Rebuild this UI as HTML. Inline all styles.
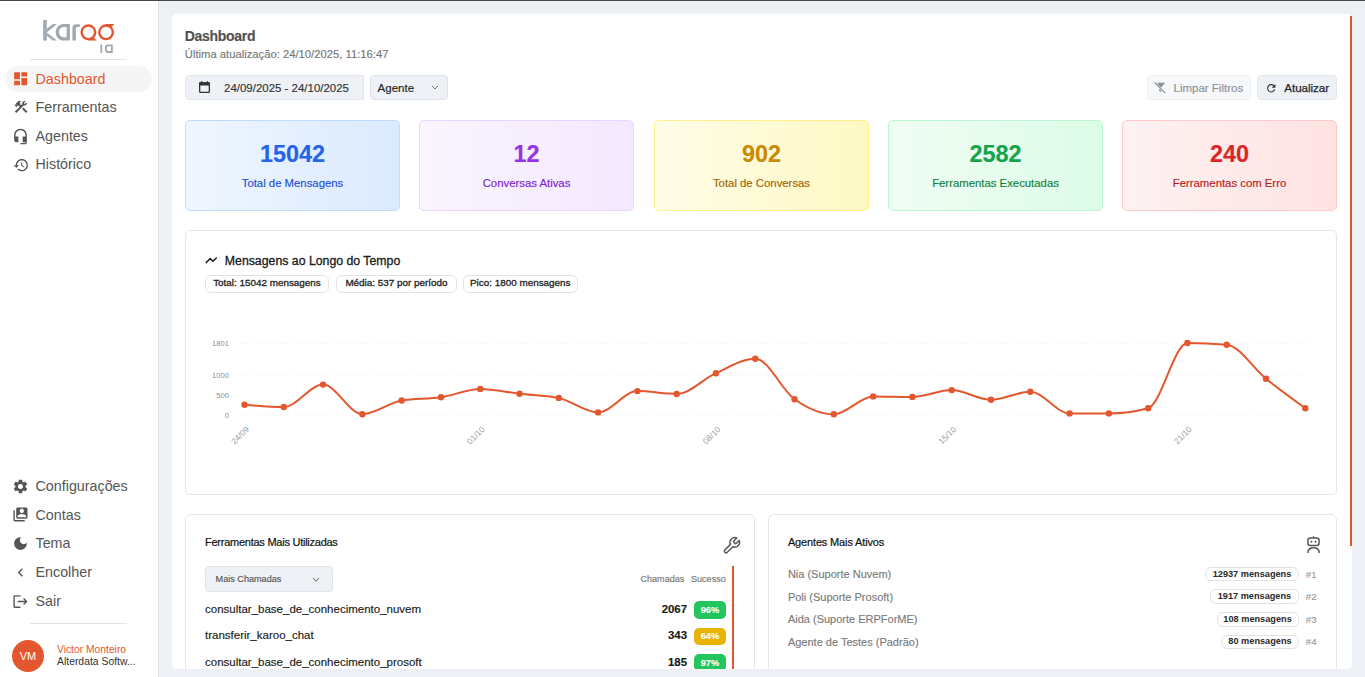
<!DOCTYPE html>
<html><head><meta charset="utf-8"><style>
html,body{margin:0;padding:0}
body{width:1365px;height:677px;overflow:hidden;position:relative;background:#edf1f5;font-family:"Liberation Sans",sans-serif}
#topline{position:absolute;left:0;top:0;width:1365px;height:1px;background:#45474a}
#side{position:absolute;left:0;top:1px;width:158px;height:676px;background:#fff;border-right:1px solid #e3e3e3}
#side .t,#side .bx,#side .ic{margin-top:-1px}
#side .t{-webkit-text-stroke:0}
#card{position:absolute;left:0;top:0;width:1365px;height:677px;clip-path:inset(14px 13px 8px 172px round 5px)}
#cardbg{position:absolute;left:172px;top:14px;width:1180px;height:655px;background:#fff;border-radius:5px}
.t{position:absolute;white-space:nowrap;line-height:1;-webkit-text-stroke:0.15px currentColor}
.bx{position:absolute;box-sizing:content-box}
.ic{position:absolute;overflow:visible}
</style></head><body>
<div id="topline"></div>
<div id="cardbg"></div>
<div id="side"><svg class="ic" style="left:40px;top:16px;width:80px;height:40px" viewBox="40 16 80 40">
<g fill="#a2aab1">
<rect x="43.2" y="20" width="3.6" height="20.6"/>
<path d="M46.8,28.8L52.8,24H56.9L46.8,32.4L57,40.6H52.8L46.8,35.8Z"/>
<path fill-rule="evenodd" d="M69.9,24H63.5C59.2,24 55.7,27.7 55.7,32.3C55.7,36.9 59.2,40.6 63.5,40.6H69.9ZM66.6,26.9H63.6C61.1,26.9 59,29.2 59,32.1C59,35 61.1,37.3 63.6,37.3H66.6Z"/>
<path d="M72.4,40.5V28.3Q72.4,24.3 76.3,24.3H79.8V26.9H77Q75.9,26.9 75.9,28.4V40.5Z"/>
<rect x="100.4" y="44.4" width="1.8" height="8.5"/>
<path fill-rule="evenodd" d="M112.8,44.4H107.9Q104.9,44.4 104.9,48.65Q104.9,52.9 107.9,52.9H112.8ZM111,46.2H108.3Q106.7,46.2 106.7,48.65Q106.7,51.1 108.3,51.1H111Z"/>
</g>
<g fill="none" stroke="#e4572e" stroke-width="2.4">
<circle cx="88.4" cy="32.3" r="6.8"/>
<circle cx="106.05" cy="32.3" r="6.8"/>
</g>
<g fill="#e4572e">
<path d="M88,39.2V40.6H96.8L93.6,37.4Z"/>
<path d="M106,25.4V24H114.2L111.2,27.5Z"/>
</g>
</svg><div class="bx" style="left:30px;top:59px;width:97px;height:1px;background:#e3e3e3"></div><div class="bx" style="left:5px;top:66px;width:146.5px;height:26px;border-radius:13px;background:#f5f5f5"></div><svg class="ic" style="left:11.75px;top:69.75px;width:17.3px;height:17.3px" viewBox="0 0 24 24"><path fill="#e4572e" d="M3 13h8V3H3v10zm0 8h8v-6H3v6zm10 0h8V11h-8v10zm0-18v6h8V3h-8z"/></svg><div class="t" style="left:35.5px;top:72.40px;font-size:14.3px;color:#e4572e">Dashboard</div><svg class="ic" style="left:12.70px;top:99.40px;width:15.8px;height:15.8px" viewBox="0 0 24 24"><path fill="#555" d="M13.783 15.172l2.121-2.121 5.996 5.996-2.121 2.121zM17.5 10c1.93 0 3.5-1.57 3.5-3.5 0-.58-.16-1.12-.41-1.6l-2.7 2.7-1.49-1.49 2.7-2.7c-.48-.25-1.02-.41-1.6-.41C15.57 3 14 4.57 14 6.5c0 .41.08.8.21 1.16l-1.85 1.85-1.78-1.78.71-.71-1.41-1.41L12 3.49c-1.17-1.17-3.07-1.170-4.24 0L4.22 7.03l1.41 1.41H2.81l-.71.71 3.54 3.54.71-.71V9.15l1.41 1.41.71-.71 1.78 1.78-7.41 7.41 2.12 2.12L16.340 9.79c.36.13.75.21 1.16.21z"/></svg><div class="t" style="left:35.5px;top:100.10px;font-size:14.3px;color:#555">Ferramentas</div><svg class="ic" style="left:12.10px;top:127.90px;width:17px;height:17px" viewBox="0 0 24 24"><path fill="#555" d="M12 1c-4.97 0-9 4.03-9 9v7c0 1.66 1.34 3 3 3h3v-8H5v-2c0-3.87 3.13-7 7-7s7 3.13 7 7v2h-4v8h4v1h-7v2h6c1.66 0 3-1.34 3-3V10c0-4.97-4.030-9-9-9z"/></svg><div class="t" style="left:35.5px;top:129.20px;font-size:14.3px;color:#555">Agentes</div><svg class="ic" style="left:12.55px;top:157.25px;width:16.3px;height:16.3px" viewBox="0 0 24 24"><path fill="#555" d="M13 3c-4.97 0-9 4.03-9 9H1l3.89 3.89.07.14L9 12H6c0-3.87 3.13-7 7-7s7 3.13 7 7-3.13 7-7 7c-1.93 0-3.68-.79-4.94-2.06l-1.42 1.42C8.27 19.99 10.51 21 13 21c4.97 0 9-4.03 9-9s-4.03-9-9-9zm-1 5v5l4.28 2.54.72-1.21-3.5-2.08V8H12z"/></svg><div class="t" style="left:35.5px;top:157.40px;font-size:14.3px;color:#555">Histórico</div><svg class="ic" style="left:11.95px;top:478.30px;width:17px;height:17px" viewBox="0 0 24 24"><path fill="#555" d="M19.14 12.94c.04-.3.06-.61.06-.94 0-.32-.02-.64-.07-.94l2.03-1.58c.18-.14.23-.41.12-.61l-1.92-3.32c-.12-.22-.37-.29-.59-.22l-2.39.96c-.5-.38-1.03-.7-1.62-.94l-.36-2.54c-.04-.24-.24-.41-.48-.41h-3.84c-.24 0-.43.17-.47.41l-.36 2.54c-.59.24-1.13.57-1.62.94l-2.39-.96c-.22-.08-.47 0-.59.22L2.74 8.87c-.12.21-.08.47.12.61l2.03 1.58c-.05.3-.09.63-.09.94s.02.64.07.94l-2.03 1.58c-.18.14-.23.41-.12.61l1.92 3.32c.12.22.37.29.59.22l2.39-.96c.5.38 1.03.7 1.62.94l.36 2.54c.05.24.24.41.48.41h3.84c.24 0 .44-.17.47-.41l.36-2.54c.59-.24 1.13-.56 1.62-.94l2.39.96c.22.08.47 0 .59-.22l1.92-3.32c.12-.22.07-.47-.12-.61l-2.01-1.58zM12 15.6c-1.98 0-3.6-1.62-3.6-3.6s1.620-3.6 3.6-3.6 3.6 1.62 3.6 3.6-1.62 3.6-3.6 3.6z"/></svg><div class="t" style="left:35.5px;top:479.10px;font-size:14.3px;color:#555">Configurações</div><svg class="ic" style="left:12.05px;top:505.85px;width:16.9px;height:16.9px" viewBox="0 0 24 24"><path fill="#555" d="M4 6H2v14c0 1.1.9 2 2 2h14v-2H4V6zm16-4H8c-1.1 0-2 .9-2 2v12c0 1.1.9 2 2 2h12c1.1 0 2-.9 2-2V4c0-1.1-.9-2-2-2zm-6 2c1.66 0 3 1.34 3 3s-1.34 3-3 3-3-1.34-3-3 1.34-3 3-3zm6 12H8v-1.5c0-1.99 4-3 6-3s6 1.01 6 3V16z"/></svg><div class="t" style="left:35.5px;top:507.50px;font-size:14.3px;color:#555">Contas</div><svg class="ic" style="left:12.25px;top:535.30px;width:17px;height:17px" viewBox="0 0 24 24"><path fill="#555" d="M12 3c-4.97 0-9 4.03-9 9s4.03 9 9 9 9-4.03 9-9c0-.46-.04-.92-.1-1.36-.98 1.37-2.58 2.26-4.4 2.260-2.98 0-5.4-2.42-5.4-5.4 0-1.81.89-3.42 2.26-4.4-.44-.06-.9-.1-1.36-.1z"/></svg><div class="t" style="left:35.5px;top:536.00px;font-size:14.3px;color:#555">Tema</div><svg class="ic" style="left:12.00px;top:564.30px;width:17px;height:17px" viewBox="0 0 24 24"><path fill="#555" d="M15.41 7.41L14 6l-6 6 6 6 1.41-1.41L10.83 12z"/></svg><div class="t" style="left:35.5px;top:564.70px;font-size:14.3px;color:#555">Encolher</div><svg class="ic" style="left:11.95px;top:593.20px;width:17px;height:17px" viewBox="0 0 24 24"><path fill="#555" d="M17 7l-1.41 1.41L18.17 11H8v2h10.17l-2.58 2.58L17 17l5-5zM4 5h8V3H4c-1.1 0-2 .9-2 2v14c0 1.1.9 2 2 2h8v-2H4V5z"/></svg><div class="t" style="left:35.5px;top:594.00px;font-size:14.3px;color:#555">Sair</div><div class="bx" style="left:30px;top:623px;width:97px;height:1px;background:#e3e3e3"></div><div class="bx" style="left:12px;top:640px;width:32px;height:32px;border-radius:50%;background:#e4572e"></div><div class="t" style="left:-172px;width:400px;text-align:center;top:651.29px;font-size:11px;color:#fff;">VM</div><div class="t" style="left:57px;top:644.68px;font-size:10.3px;color:#e4572e">Victor Monteiro</div><div class="t" style="left:57px;top:656.80px;font-size:10.4px;color:#333">Alterdata Softw...</div></div><div id="card"><div class="t" style="left:184.8px;top:28.75px;font-size:14px;color:#505050;font-weight:700;letter-spacing:-0.3px">Dashboard</div><div class="t" style="left:184.8px;top:48.97px;font-size:11.26px;color:#777">Última atualização: 24/10/2025, 11:16:47</div><div class="bx" style="left:185px;top:75px;width:177px;height:23px;border:1px solid #e3e7eb;background:#eef1f5;border-radius:4px 0 0 4px"></div><svg class="ic" style="left:195px;top:78px;width:18px;height:18px" viewBox="195 78 18 18"><rect x="199.65" y="82.85" width="9.7" height="9.5" rx="0.9" fill="none" stroke="#333" stroke-width="1.3"/><rect x="199" y="82.2" width="11" height="3.2" rx="0.9" fill="#333"/><rect x="200.9" y="81.2" width="1.4" height="2" fill="#333"/><rect x="206.7" y="81.2" width="1.4" height="2" fill="#333"/></svg><div class="t" style="left:224px;top:82.69px;font-size:11.47px;color:#333">24/09/2025 - 24/10/2025</div><div class="bx" style="left:370px;top:75px;width:76px;height:23px;border:1px solid #dfe3e8;background:#eef1f5;border-radius:4px"></div><div class="t" style="left:377.6px;top:83.17px;font-size:11.5px;color:#222">Agente</div><svg class="ic" style="left:430.5px;top:84.5px;width:8px;height:5px" viewBox="0 0 8 5"><path d="M1 1L4 4L7 1" fill="none" stroke="#777" stroke-width="1"/></svg><div class="bx" style="left:1146.6px;top:75.4px;width:102.5px;height:22.5px;border:1px solid #edf0f3;background:#f6f8fa;border-radius:4px"></div><svg class="ic" style="left:1150px;top:76px;width:30px;height:22px" viewBox="1150 76 30 22"><path d="M1157.4,82.8H1165.1L1161.4,87.2V92.3L1159.2,91V87.2Z" fill="#8c9197"/><path d="M1154.4,82.2L1165.4,93.2" stroke="#f6f8fa" stroke-width="2.2"/><path d="M1155,82.8L1164.8,92.6" stroke="#8c9197" stroke-width="1.25" stroke-linecap="round"/></svg><div class="t" style="left:1173.5px;top:83.07px;font-size:11.5px;color:#8c9197">Limpar Filtros</div><div class="bx" style="left:1257.3px;top:75.4px;width:77.4px;height:22.5px;border:1px solid #e3e7eb;background:#eef1f5;border-radius:4px"></div><svg class="ic" style="left:1265px;top:81.7px;width:12.5px;height:12.5px" viewBox="0 0 24 24"><path fill="#333" d="M17.65 6.35C16.2 4.9 14.21 4 12 4c-4.42 0-7.99 3.58-7.99 8s3.57 8 7.99 8c3.73 0 6.84-2.55 7.73-6h-2.08c-.82 2.33-3.04 4-5.65 4-3.31 0-6-2.69-6-6s2.69-6 6-6c1.66 0 3.14.69 4.22 1.78L13 11h7V4l-2.35 2.35z"/></svg><div class="t" style="left:1284.3px;top:82.18px;font-size:11.6px;color:#1f2328;font-weight:400;-webkit-text-stroke:0.25px #1f2328;letter-spacing:-0.05px">Atualizar</div><div class="bx" style="left:185px;top:120px;width:213px;height:89px;border:1px solid #bfdbfe;border-radius:5px;background:linear-gradient(to right,#eff6ff,#dbeafe)"></div><div class="t" style="left:92.5px;width:400px;text-align:center;top:142.99px;font-size:23.4px;color:#2563eb;font-weight:700">15042</div><div class="t" style="left:92.5px;width:400px;text-align:center;top:177.99px;font-size:11.35px;color:#1d4ed8">Total de Mensagens</div><div class="bx" style="left:419px;top:120px;width:213px;height:89px;border:1px solid #e9d5ff;border-radius:5px;background:linear-gradient(to right,#faf5ff,#f3e8ff)"></div><div class="t" style="left:326.5px;width:400px;text-align:center;top:142.99px;font-size:23.4px;color:#9333ea;font-weight:700">12</div><div class="t" style="left:326.5px;width:400px;text-align:center;top:177.99px;font-size:11.35px;color:#7e22ce">Conversas Ativas</div><div class="bx" style="left:654px;top:120px;width:213px;height:89px;border:1px solid #fef08a;border-radius:5px;background:linear-gradient(to right,#fefce8,#fef9c3)"></div><div class="t" style="left:561.5px;width:400px;text-align:center;top:142.99px;font-size:23.4px;color:#ca8a04;font-weight:700">902</div><div class="t" style="left:561.5px;width:400px;text-align:center;top:177.99px;font-size:11.35px;color:#a16207">Total de Conversas</div><div class="bx" style="left:888px;top:120px;width:213px;height:89px;border:1px solid #bbf7d0;border-radius:5px;background:linear-gradient(to right,#f0fdf4,#dcfce7)"></div><div class="t" style="left:795.5px;width:400px;text-align:center;top:142.99px;font-size:23.4px;color:#16a34a;font-weight:700">2582</div><div class="t" style="left:795.5px;width:400px;text-align:center;top:177.99px;font-size:11.35px;color:#15803d">Ferramentas Executadas</div><div class="bx" style="left:1122px;top:120px;width:213px;height:89px;border:1px solid #fecaca;border-radius:5px;background:linear-gradient(to right,#fef2f2,#fee2e2)"></div><div class="t" style="left:1029.5px;width:400px;text-align:center;top:142.99px;font-size:23.4px;color:#dc2626;font-weight:700">240</div><div class="t" style="left:1029.5px;width:400px;text-align:center;top:177.99px;font-size:11.35px;color:#b91c1c">Ferramentas com Erro</div><div class="bx" style="left:185px;top:230px;width:1150px;height:263px;border:1px solid #e4e6e9;border-radius:5px"></div><svg class="ic" style="left:200px;top:250px;width:30px;height:20px" viewBox="200 250 30 20"><path d="M206.3 262.6L210.2 258.5L212.9 261.3L216.3 258" fill="none" stroke="#1a1a1a" stroke-width="1.5" stroke-linecap="round" stroke-linejoin="round"/></svg><div class="t" style="left:224.8px;top:254.79px;font-size:12.3px;color:#1a1a1a;-webkit-text-stroke:0.3px #1a1a1a">Mensagens ao Longo do Tempo</div><div class="bx" style="left:205.3px;top:275.3px;width:121.3px;height:15.4px;border:1px solid #e2e2e2;border-radius:6px"></div><div class="t" style="left:66.95000000000005px;width:400px;text-align:center;top:277.92px;font-size:9.9px;color:#222;-webkit-text-stroke:0.3px #222">Total: 15042 mensagens</div><div class="bx" style="left:336.3px;top:275.3px;width:118.3px;height:15.4px;border:1px solid #e2e2e2;border-radius:6px"></div><div class="t" style="left:196.45000000000005px;width:400px;text-align:center;top:277.92px;font-size:9.9px;color:#222;-webkit-text-stroke:0.3px #222">Média: 537 por período</div><div class="bx" style="left:463px;top:275.3px;width:112.5px;height:15.4px;border:1px solid #e2e2e2;border-radius:6px"></div><div class="t" style="left:320.25px;width:400px;text-align:center;top:277.92px;font-size:9.9px;color:#222;-webkit-text-stroke:0.3px #222">Pico: 1800 mensagens</div><svg class="ic" style="left:0;top:0;width:1365px;height:677px" viewBox="0 0 1365 677">
<g stroke="#f1f1f1" stroke-width="1" stroke-dasharray="2 3"><line x1="240.7" y1="343" x2="1309.4" y2="343"/><line x1="240.7" y1="374.9" x2="1309.4" y2="374.9"/><line x1="240.7" y1="414.8" x2="1309.4" y2="414.8"/></g>
<g font-family="Liberation Sans" font-size="7.6" fill="#8a8f98" text-anchor="end"><text x="229" y="345.6">1801</text><text x="229" y="377.5">1000</text><text x="229" y="397.5">500</text><text x="229" y="418.4">0</text></g>
<g font-family="Liberation Sans" font-size="8.4" fill="#9a9ea5" text-anchor="end"><text transform="translate(249.5,430) rotate(-45)">24/09</text><text transform="translate(485.2,430) rotate(-45)">01/10</text><text transform="translate(721.0,430) rotate(-45)">08/10</text><text transform="translate(956.7,430) rotate(-45)">15/10</text><text transform="translate(1192.4,430) rotate(-45)">21/10</text></g>
<path d="M244.50,404.70C257.60,405.85,270.69,407.00,283.79,407.00C296.89,407.00,309.98,384.60,323.08,384.60C336.17,384.60,349.27,414.20,362.37,414.20C375.46,414.20,388.56,402.63,401.66,400.50C414.75,398.37,427.85,399.23,440.94,397.30C454.04,395.37,467.14,388.90,480.23,388.90C493.33,388.90,506.43,392.20,519.52,393.70C532.62,395.20,545.71,395.10,558.81,397.90C571.91,400.70,585.00,412.40,598.10,412.40C611.20,412.40,624.29,391.10,637.39,391.10C650.49,391.10,663.58,394.00,676.68,394.00C689.77,394.00,702.87,379.08,715.97,373.20C729.06,367.32,742.16,358.70,755.26,358.70C768.35,358.70,781.45,389.93,794.54,399.20C807.64,408.47,820.74,414.30,833.83,414.30C846.93,414.30,860.03,396.40,873.12,396.40C886.22,396.40,899.31,396.90,912.41,396.90C925.51,396.90,938.60,390.10,951.70,390.10C964.80,390.10,977.89,399.80,990.99,399.80C1004.09,399.80,1017.18,391.80,1030.28,391.80C1043.37,391.80,1056.47,413.40,1069.57,413.40C1082.66,413.40,1095.76,413.40,1108.86,413.40C1121.95,413.40,1135.05,411.67,1148.14,408.20C1161.24,404.73,1174.34,343.00,1187.43,343.00C1200.53,343.00,1213.63,343.57,1226.72,344.70C1239.82,345.83,1252.91,368.22,1266.01,378.80C1279.11,389.38,1292.20,398.79,1305.30,408.20" fill="none" stroke="#e4572e" stroke-width="2"/>
<g fill="#e4572e"><circle cx="244.50" cy="404.70" r="3.2"/><circle cx="283.79" cy="407.00" r="3.2"/><circle cx="323.08" cy="384.60" r="3.2"/><circle cx="362.37" cy="414.20" r="3.2"/><circle cx="401.66" cy="400.50" r="3.2"/><circle cx="440.94" cy="397.30" r="3.2"/><circle cx="480.23" cy="388.90" r="3.2"/><circle cx="519.52" cy="393.70" r="3.2"/><circle cx="558.81" cy="397.90" r="3.2"/><circle cx="598.10" cy="412.40" r="3.2"/><circle cx="637.39" cy="391.10" r="3.2"/><circle cx="676.68" cy="394.00" r="3.2"/><circle cx="715.97" cy="373.20" r="3.2"/><circle cx="755.26" cy="358.70" r="3.2"/><circle cx="794.54" cy="399.20" r="3.2"/><circle cx="833.83" cy="414.30" r="3.2"/><circle cx="873.12" cy="396.40" r="3.2"/><circle cx="912.41" cy="396.90" r="3.2"/><circle cx="951.70" cy="390.10" r="3.2"/><circle cx="990.99" cy="399.80" r="3.2"/><circle cx="1030.28" cy="391.80" r="3.2"/><circle cx="1069.57" cy="413.40" r="3.2"/><circle cx="1108.86" cy="413.40" r="3.2"/><circle cx="1148.14" cy="408.20" r="3.2"/><circle cx="1187.43" cy="343.00" r="3.2"/><circle cx="1226.72" cy="344.70" r="3.2"/><circle cx="1266.01" cy="378.80" r="3.2"/><circle cx="1305.30" cy="408.20" r="3.2"/></g>
</svg><div class="bx" style="left:185px;top:514px;width:568px;height:200px;border:1px solid #e4e6e9;border-radius:6px"></div><div class="t" style="left:205px;top:537.29px;font-size:11px;color:#111;letter-spacing:-0.25px;-webkit-text-stroke:0.2px #111">Ferramentas Mais Utilizadas</div><svg class="ic" style="left:721.8px;top:535.6px;width:19.2px;height:19.2px" viewBox="0 0 24 24"><path d="M14.7 6.3a1 1 0 0 0 0 1.4l1.6 1.6a1 1 0 0 0 1.4 0l3.77-3.77a6 6 0 0 1-7.94 7.94l-6.91 6.91a2.12 2.12 0 0 1-3-3l6.91-6.91a6 6 0 0 1 7.94-7.94l-3.76 3.76z" fill="none" stroke="#5a5a5a" stroke-width="1.9" stroke-linejoin="round"/></svg><div class="bx" style="left:205px;top:566.2px;width:126px;height:23.4px;border:1px solid #e0e4e8;background:#eef1f5;border-radius:4px"></div><div class="t" style="left:215.6px;top:575.40px;font-size:9.1px;color:#555">Mais Chamadas</div><svg class="ic" style="left:311.6px;top:576.9px;width:8px;height:5px" viewBox="0 0 8 5"><path d="M1 1L4 4L7 1" fill="none" stroke="#7a7a7a" stroke-width="1.05"/></svg><div class="t" style="right:680.6px;top:574.90px;font-size:9.1px;color:#777">Chamadas</div><div class="t" style="right:639.2px;top:574.90px;font-size:9.1px;color:#777">Sucesso</div><div class="bx" style="left:732.2px;top:566.3px;width:2px;height:110px;background:#e4572e"></div><div class="t" style="left:205px;top:603.97px;font-size:11.5px;color:#1a1a1a">consultar_base_de_conhecimento_nuvem</div><div class="t" style="right:678px;top:604.05px;font-size:11.4px;color:#1a1a1a;font-weight:700">2067</div><div class="bx" style="left:694px;top:601.3px;width:31.8px;height:17.3px;border-radius:5px;background:#22c55e"></div><div class="t" style="left:509.9px;width:400px;text-align:center;top:605.71px;font-size:9.2px;color:#fff;font-weight:700">96%</div><div class="t" style="left:205px;top:630.07px;font-size:11.5px;color:#1a1a1a">transferir_karoo_chat</div><div class="t" style="right:678px;top:630.15px;font-size:11.4px;color:#1a1a1a;font-weight:700">343</div><div class="bx" style="left:694px;top:628px;width:31.8px;height:17.3px;border-radius:5px;background:#eab308"></div><div class="t" style="left:509.9px;width:400px;text-align:center;top:632.41px;font-size:9.2px;color:#fff;font-weight:700">64%</div><div class="t" style="left:205px;top:657.07px;font-size:11.5px;color:#1a1a1a">consultar_base_de_conhecimento_prosoft</div><div class="t" style="right:678px;top:657.15px;font-size:11.4px;color:#1a1a1a;font-weight:700">185</div><div class="bx" style="left:694px;top:654.2px;width:31.8px;height:17.3px;border-radius:5px;background:#22c55e"></div><div class="t" style="left:509.9px;width:400px;text-align:center;top:658.61px;font-size:9.2px;color:#fff;font-weight:700">97%</div><div class="bx" style="left:768px;top:514px;width:567px;height:200px;border:1px solid #e4e6e9;border-radius:6px"></div><div class="t" style="left:787.9px;top:537.09px;font-size:11px;color:#111;letter-spacing:-0.15px;-webkit-text-stroke:0.2px #111">Agentes Mais Ativos</div><svg class="ic" style="left:1305px;top:535px;width:18px;height:20px" viewBox="0 0 18 20"><rect x="2.9" y="3" width="11.2" height="7.4" rx="2.5" fill="none" stroke="#555" stroke-width="1.45"/><path d="M8.5 1.3V3" stroke="#555" stroke-width="1.2"/><circle cx="6.45" cy="6.7" r="1" fill="#555"/><circle cx="10.5" cy="6.7" r="1" fill="#555"/><path d="M2.9 18C2.9 14.6 5.4 12.75 8.55 12.75S14.2 14.6 14.2 18" fill="none" stroke="#555" stroke-width="1.45"/></svg><div class="t" style="left:787.9px;top:569.19px;font-size:11px;color:#7a7a7a">Nia (Suporte Nuvem)</div><div class="bx" style="left:1205.4px;top:567.2px;width:91.2px;height:12.2px;border:1px solid #e2e2e2;border-radius:6px"></div><div class="t" style="left:1052.0px;width:400px;text-align:center;top:569.51px;font-size:9.2px;color:#2a2a2a;font-weight:700;-webkit-text-stroke:0">12937 mensagens</div><div class="t" style="left:1305.8px;top:569.77px;font-size:9.6px;color:#999">#1</div><div class="t" style="left:787.9px;top:592.09px;font-size:11px;color:#7a7a7a">Poli (Suporte Prosoft)</div><div class="bx" style="left:1210.3px;top:589.4px;width:86.3px;height:12.2px;border:1px solid #e2e2e2;border-radius:6px"></div><div class="t" style="left:1054.4499999999998px;width:400px;text-align:center;top:591.71px;font-size:9.2px;color:#2a2a2a;font-weight:700;-webkit-text-stroke:0">1917 mensagens</div><div class="t" style="left:1305.8px;top:591.97px;font-size:9.6px;color:#999">#2</div><div class="t" style="left:787.9px;top:614.29px;font-size:11px;color:#7a7a7a">Aida (Suporte ERPForME)</div><div class="bx" style="left:1216.5px;top:612.4px;width:80.1px;height:12.2px;border:1px solid #e2e2e2;border-radius:6px"></div><div class="t" style="left:1057.55px;width:400px;text-align:center;top:614.71px;font-size:9.2px;color:#2a2a2a;font-weight:700;-webkit-text-stroke:0">108 mensagens</div><div class="t" style="left:1305.8px;top:614.97px;font-size:9.6px;color:#999">#3</div><div class="t" style="left:787.9px;top:636.99px;font-size:11px;color:#7a7a7a">Agente de Testes (Padrão)</div><div class="bx" style="left:1221.4px;top:634.6px;width:75.2px;height:12.2px;border:1px solid #e2e2e2;border-radius:6px"></div><div class="t" style="left:1060.0px;width:400px;text-align:center;top:636.91px;font-size:9.2px;color:#2a2a2a;font-weight:700;-webkit-text-stroke:0">80 mensagens</div><div class="t" style="left:1305.8px;top:637.17px;font-size:9.6px;color:#999">#4</div></div><div class="bx" style="left:1350px;top:16px;width:2px;height:530px;background:#e4572e"></div>
</body></html>
